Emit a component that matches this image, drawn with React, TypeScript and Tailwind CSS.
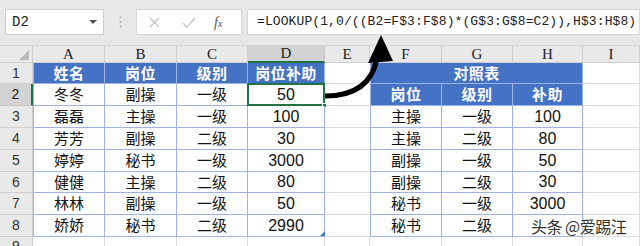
import React from "react";

const cjk = "font-['Noto_Sans_CJK_SC','Microsoft_YaHei',sans-serif]";
const num = "font-['Liberation_Sans',Arial,sans-serif]";
const mono = "font-['Liberation_Mono','Courier_New',monospace]";
const serif = "font-['Liberation_Serif','Times_New_Roman',serif]";

const COLS = ["A", "B", "C", "D", "E", "F", "G", "H", "I"];

const left = [
  ["冬冬", "副操", "一级", "50"],
  ["磊磊", "主操", "一级", "100"],
  ["芳芳", "副操", "二级", "30"],
  ["婷婷", "秘书", "一级", "3000"],
  ["健健", "主操", "二级", "80"],
  ["林林", "副操", "一级", "50"],
  ["娇娇", "秘书", "二级", "2990"],
];

const right = [
  ["主操", "一级", "100"],
  ["主操", "二级", "80"],
  ["副操", "一级", "50"],
  ["副操", "二级", "30"],
  ["秘书", "一级", "3000"],
  ["秘书", "二级", ""],
];

const isNum = (s: string) => /^\d+$/.test(s);

// plain grid cell (no table)
function Blank({ noRight = false }: { noRight?: boolean }) {
  return <div className={`border-b border-[#dcdcdc] bg-white ${noRight ? "" : "border-r"}`} />;
}

function Head({ text, first = false, span = false }: { text: string; first?: boolean; span?: boolean }) {
  return (
    <div
      className={`flex items-center justify-center bg-[#4472c4] text-white font-bold text-[15px] tracking-wide border-r border-b border-[#9db3e3] ${cjk} ${first ? "border-l" : ""} ${span ? "col-span-3" : ""}`}
    >
      {text}
    </div>
  );
}

function Cell({ text, first = false, selected = false }: { text: string; first?: boolean; selected?: boolean }) {
  return (
    <div
      className={`relative flex items-center justify-center bg-white text-[#111] border-r border-b border-[#9fb2e0] ${isNum(text) ? `${num} text-[16px]` : `${cjk} text-[15px]`} ${first ? "border-l" : ""}`}
    >
      {text}
      {selected && (
        <>
          <div className="absolute -left-[1px] -top-[1px] -right-[1px] -bottom-[1px] border-2 border-[#217346]" />
          <div className="absolute -right-[3px] -bottom-[3px] w-[5px] h-[5px] bg-[#217346] border border-white" />
        </>
      )}
    </div>
  );
}

function RowNum({ n, active = false }: { n: number; active?: boolean }) {
  return (
    <div
      className={`flex items-center justify-center text-[14px] ${num} border-b border-r ${active ? "bg-[#d3d3d3] border-r-2 border-r-[#217346] border-b-[#c8c8c8] text-[#222]" : "bg-[#e9e9e9] border-[#cfcfcf] text-[#333]"}`}
    >
      {n}
    </div>
  );
}

export default function App() {
  return (
    <div className="relative w-[640px] h-[246px] overflow-hidden bg-[#e8e8e8]">
      {/* formula bar */}
      <div className="h-[46px] flex items-start pt-[9px] pl-[5px] gap-0 border-b border-[#d4d4d4]">
        <div className="w-[99px] h-[26px] bg-white border border-[#cdcdcd] flex items-center justify-between px-[6px]">
          <span className={`${mono} text-[14px] text-[#222]`}>D2</span>
          <svg width="8" height="5" viewBox="0 0 8 5">
            <path d="M0 0 L8 0 L4 4 Z" fill="#555" />
          </svg>
        </div>
        <div className="w-[32px] h-[26px] flex items-center justify-center">
          <svg width="3" height="12" viewBox="0 0 3 12">
            <circle cx="1.5" cy="1.5" r="1" fill="#b3b3b3" />
            <circle cx="1.5" cy="6" r="1" fill="#b3b3b3" />
            <circle cx="1.5" cy="10.5" r="1" fill="#b3b3b3" />
          </svg>
        </div>
        <div className="w-[106px] h-[26px] bg-white border border-[#d6d6d6] flex items-center pl-[12px] gap-[22px]">
          <svg width="11" height="11" viewBox="0 0 11 11">
            <path d="M1 1 L10 10 M10 1 L1 10" stroke="#c4c4c4" strokeWidth="1.3" />
          </svg>
          <svg width="14" height="11" viewBox="0 0 14 11">
            <path d="M1 6 L5 10 L13 1" stroke="#c4c4c4" strokeWidth="1.5" fill="none" />
          </svg>
          <span className={`${serif} italic text-[14px] text-[#555] -ml-[4px]`}>
            f<span className="text-[10px]">x</span>
          </span>
        </div>
        <div className="ml-[5px] flex-1 h-[26px] bg-white border border-[#d6d6d6] flex items-center pl-[9px] overflow-hidden">
          <span className={`${mono} text-[13px] text-[#222] whitespace-nowrap tracking-[0.1px]`}>
            =LOOKUP(1,0/((B2=F$3:F$8)*(G$3:G$8=C2)),H$3:H$8)
          </span>
        </div>
      </div>

      {/* sheet */}
      <div className="grid grid-cols-[33px_72px_72px_71px_77px_45px_72px_71px_70px_1fr] grid-rows-[17px_21px_22px_22px_22px_22px_21px_22px_22px_20px] bg-white">
        {/* column headers */}
        <div className="relative bg-[#e9e9e9] border-r border-b border-[#cfcfcf]">
          <svg className="absolute right-[3px] bottom-[2px]" width="10" height="10" viewBox="0 0 10 10">
            <path d="M10 0 L10 10 L0 10 Z" fill="#b9b9b9" />
          </svg>
        </div>
        {COLS.map((c) => (
          <div
            key={c}
            className={`flex items-center justify-center ${serif} text-[15px] text-[#222] border-r ${c === "D" ? "bg-[#d3d3d3] border-b-2 border-b-[#217346] border-r-[#c8c8c8]" : "bg-[#e9e9e9] border-b border-[#cfcfcf]"}`}
          >
            {c}
          </div>
        ))}

        {/* row 1 */}
        <RowNum n={1} />
        <Head text="姓名" first />
        <Head text="岗位" />
        <Head text="级别" />
        <Head text="岗位补助" />
        <Blank noRight />
        <Head text="对照表" first span />
        <Blank />

        {/* rows 2-8 */}
        {left.map((r, i) => {
          const row = i + 2;
          const rr = i === 0 ? null : right[i - 1];
          return (
            <React.Fragment key={row}>
              <RowNum n={row} active={row === 2} />
              <Cell text={r[0]} first />
              <Cell text={r[1]} />
              <Cell text={r[2]} />
              <Cell text={r[3]} selected={row === 2} />
              <Blank noRight />
              {rr ? (
                <>
                  <Cell text={rr[0]} first />
                  <Cell text={rr[1]} />
                  <Cell text={rr[2]} />
                </>
              ) : (
                <>
                  <Head text="岗位" first />
                  <Head text="级别" />
                  <Head text="补助" />
                </>
              )}
              <Blank />
            </React.Fragment>
          );
        })}

        {/* row 9 */}
        <RowNum n={9} />
        {COLS.map((c) => (
          <Blank key={c} />
        ))}
      </div>

      {/* table resize handle */}
      <svg className="absolute left-[320px] top-[231px]" width="5" height="5" viewBox="0 0 5 5">
        <path d="M5 0 L5 5 L0 5 Z" fill="#4472c4" />
      </svg>

      {/* arrow */}
      <svg className="absolute left-0 top-0 pointer-events-none" width="640" height="246" viewBox="0 0 640 246">
        <path d="M325 96 C352 96 372 86 377 58" stroke="#000" strokeWidth="5" fill="none" />
        <path d="M381 35 L368 63 L393 61 Z" fill="#000" />
      </svg>

      {/* watermark */}
      <div
        className={`absolute left-[531px] top-[216px] text-[16px] leading-[20px] text-[#333] ${cjk} whitespace-nowrap tracking-[-0.5px] [text-shadow:0_0_2px_#fff,0_0_2px_#fff]`}
      >
        头条 @爱踢汪
      </div>
    </div>
  );
}
